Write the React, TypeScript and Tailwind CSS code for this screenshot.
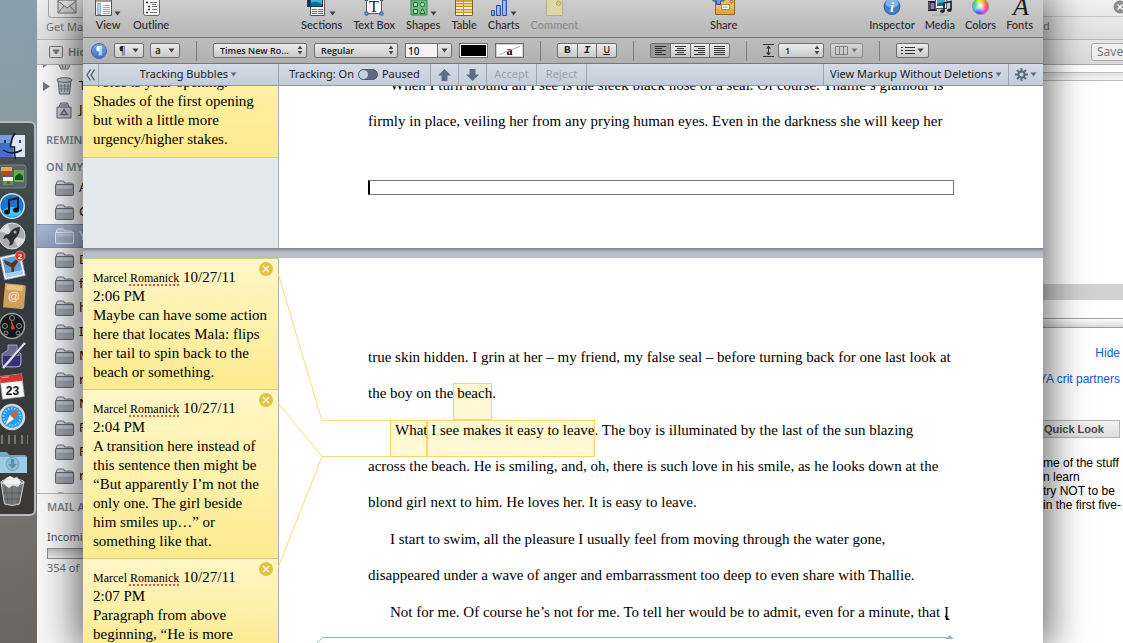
import type { ReactNode } from 'react';

const uiFont = "font-['Noto_Sans','Open_Sans',sans-serif]";
const labelFont = "font-['Lato','Open_Sans',sans-serif]";
const controlFont = "font-['Open_Sans','Noto_Sans',sans-serif]";
const serif = "font-['Liberation_Serif','Times_New_Roman',serif]";

function Caret({ className = 'fill-[#444]' }: { className?: string }) {
  return (
    <svg width="7" height="5" viewBox="0 0 7 5" className={`shrink-0 ${className}`} aria-hidden="true">
      <path d="M0.5 0.5h6L3.5 4.5z" />
    </svg>
  );
}

function Stepper() {
  return (
    <svg width="6" height="10" viewBox="0 0 6 10" className="pointer-events-none absolute right-1 top-0.5 fill-[#444]" aria-hidden="true">
      <path d="M3 0.5L5.3 4H0.7zM3 9.5L5.3 6H0.7z" />
    </svg>
  );
}

/* ---------- Toolbar drawings, all hang above the label and run past the top edge ---------- */

function ViewIcon() {
  return (
    <svg width="17" height="16" viewBox="0 0 17 16" aria-hidden="true">
      <path d="M.5 0v15.500h16V0" fill="#fff" stroke="#555" />
      <path d="M1 0h15v2H1z" fill="#999" />
      <path d="M2 3h4v12H2z" fill="#7aa6da" />
      <path d="M2.500 5h3M2.500 7h3M2.500 9h3M2.500 11h3M2.500 13h3" stroke="#e8f1fb" />
      <path d="M8 5.500h7M8 7.500h7M8 9.500h7M8 11.500h7M8 13.500h7" stroke="#aaa" />
    </svg>
  );
}
function OutlineIcon() {
  return (
    <svg width="17" height="16" viewBox="0 0 17 16" aria-hidden="true">
      <path d="M.5 0v13.500q0 2 2 2h12q2 0 2-2V0" fill="#f4f4f4" stroke="#666" />
      <path d="M3 2.500h2M5 6.500h2M5 9.500h2M3 12.500h2" stroke="#333" strokeWidth="1.500" />
      <path d="M7 2.500h7M9 6.500h5M9 9.500h5M7 12.500h7M9 4.500h4" stroke="#777" />
    </svg>
  );
}
function SectionsIcon() {
  return (
    <svg width="20" height="16" viewBox="0 0 20 16" aria-hidden="true">
      <path d="M3.500 0v15.500h14V0" fill="#fff" stroke="#555" />
      <path d="M0 0h16v7H0z" fill="#1b3446" />
      <path d="M4 0h11v6H4z" fill="#43b4d8" />
      <path d="M4 3q5-3 11 1v2H4z" fill="#0e6e98" />
      <path d="M5 9.500h5M5 11.500h5M5 13.500h5M11 9.500h5M11 11.500h5M11 13.500h5" stroke="#666" />
    </svg>
  );
}
function TextBoxIcon() {
  return (
    <svg width="20" height="17" viewBox="0 0 20 17" aria-hidden="true">
      <path d="M2.500 0v14.500h15V0" fill="#fff" stroke="#556" />
      <path d="M1 13h3v3H1zM16 13h3v3h-3zM1 0h3v1.500H1zM16 0h3v1.500h-3z" fill="#7eaee6" stroke="#2c4a7c" strokeWidth=".8" />
      <text x="10" y="13" textAnchor="middle" fontFamily="Liberation Serif" fontSize="16" fill="#222">T</text>
    </svg>
  );
}
function ShapesIcon() {
  return (
    <svg width="18" height="16" viewBox="0 0 18 16" aria-hidden="true">
      <path d="M1 0v15h16V0z" fill="#6cbf7d" stroke="#3b8350" />
      <g fill="#a9e0b3" stroke="#276338">
        <path d="M3.500 9.500h4v4h-4zM12.500 8.500L15 13.500h-5zM3.500 2.500h4v4h-4z" />
        <circle cx="12.500" cy="4.500" r="2.200" />
      </g>
    </svg>
  );
}
function TableIcon() {
  return (
    <svg width="18" height="16" viewBox="0 0 18 16" aria-hidden="true">
      <path d="M.5 0v15.500h17V0" fill="#fff3cb" stroke="#80612a" />
      <path d="M1 0h16v2H1z" fill="#d3a145" />
      <path d="M1 3.500h16M1 6.500h16M1 9.500h16M1 12.500h16M8.500 0v15" stroke="#c49136" />
      <path d="M1 4h7v2H1zM1 10h7v2H1zM9 4h8v2H9zM9 10h8v2H9z" fill="#f4cc78" />
    </svg>
  );
}
function ChartsIcon() {
  return (
    <svg width="18" height="16" viewBox="0 0 18 16" aria-hidden="true">
      <g fill="#7ba7e4" stroke="#2d559b">
        <path d="M1.500 10.500h3v5h-3zM6.500 5.500h4v10h-4zM12.500 0h4v15.500h-4z" />
      </g>
      <path d="M8 6.500v8M14 1v13.500" stroke="#b9d4f7" />
    </svg>
  );
}
function CommentIcon() {
  return (
    <svg width="17" height="16" viewBox="0 0 17 16" aria-hidden="true">
      <path d="M.5 0v15.500h16V0" fill="#ddd6a5" stroke="#b5ae86" />
      <circle cx="12.500" cy="3.500" r="2.200" fill="none" stroke="#b9a75c" />
      <path d="M11.500 2.500l2 2M13.500 2.500l-2 2" stroke="#b9a75c" />
    </svg>
  );
}
function ShareIcon() {
  return (
    <svg width="24" height="17" viewBox="0 0 24 17" aria-hidden="true">
      <path d="M3.500 0v15.500h19V0" fill="#efbd5a" stroke="#8d6420" />
      <path d="M4 10h18v5H4z" fill="#e3a940" />
      <path d="M9.500 5.500h8v5h-8z" fill="#fff" stroke="#a5884c" />
      <path d="M11 8h5" stroke="#777" strokeDasharray="2 .6" />
      <circle cx="19.500" cy="2.500" r="1.300" fill="#fff" stroke="#c23a2a" />
      <path d="M1 0h11v2H8.500v3.500h-4V2H1z" fill="#6b9bd8" stroke="#2f5589" />
    </svg>
  );
}
function InspectorIcon() {
  return (
    <svg width="18" height="17" viewBox="0 0 18 17" aria-hidden="true">
      <circle cx="9" cy="7.500" r="8" fill="#3f7fcf" stroke="#36609c" />
      <ellipse cx="9" cy="4" rx="6.500" ry="4.500" fill="#82b2ea" />
      <text x="9" y="13" textAnchor="middle" fontFamily="Liberation Serif" fontStyle="italic" fontWeight="bold" fontSize="15" fill="#fff">i</text>
    </svg>
  );
}
function MediaIcon() {
  return (
    <svg width="26" height="17" viewBox="0 0 26 17" aria-hidden="true">
      <path d="M1 2h9v10H1z" fill="#20222b" />
      <path d="M3.500 4h4v6h-4z" fill="#9c6bc2" />
      <path d="M2 3.500v8M9 3.500v8" stroke="#ddd" strokeDasharray="1 1" />
      <path d="M8.500 0v9.500h11V0" fill="#f5f8fb" stroke="#555" />
      <path d="M10 0h8v7h-8z" fill="#4ba8d4" />
      <path d="M10 5q4-3 8 0v2h-8z" fill="#255f7b" />
      <path d="M17 12V4l7-1.500v8.500" fill="none" stroke="#1e2430" strokeWidth="1.700" />
      <ellipse cx="15.300" cy="12.300" rx="2.200" ry="1.700" fill="#1e2430" />
      <ellipse cx="22.300" cy="11.300" rx="2.200" ry="1.700" fill="#1e2430" />
      <path d="M5 16h16" stroke="#999" strokeOpacity=".7" />
    </svg>
  );
}
function ColorsIcon() {
  return (
    <span className="mb-px block size-[17px] rounded-full border border-[#888] bg-[radial-gradient(circle,#fff_0%,#ffffff00_60%),conic-gradient(from_90deg,#ff4040,#ff40e0,#5040ff,#30c8ff,#30e070,#e0f030,#ff9030,#ff4040)]" />
  );
}
function FontsIcon() {
  return (
    <svg width="20" height="17" viewBox="0 0 20 17" className="overflow-visible" aria-hidden="true">
      <text x="11" y="16" textAnchor="middle" fontFamily="Liberation Serif" fontStyle="italic" fontSize="26" fill="#1c1c1c">A</text>
    </svg>
  );
}

function ToolButton({ label, icon, menu, disabled }: { label: string; icon: ReactNode; menu?: boolean; disabled?: boolean }) {
  return (
    <button type="button" disabled={disabled} className="flex flex-col items-center justify-end text-[#2b2b2b] disabled:text-[#8b8b8b]">
      <span className="flex items-end gap-0.5">
        {icon}
        {menu && <Caret />}
      </span>
      <span className={`${labelFont} h-[18px] whitespace-nowrap text-[11px] font-medium leading-[18px]`}>{label}</span>
    </button>
  );
}

/* ---------- Format bar ---------- */

const control = 'h-[15px] shrink-0 rounded-[2px] border border-[#6f6f6f] bg-linear-to-b from-[#ececec] to-[#c9c9c9] text-[#222]';

function Divider() {
  return <span className="mx-4 h-5 w-px shrink-0 bg-[#7d7d7d]" />;
}

function Picker({ label, value, width }: { label: string; value: string; width: string }) {
  return (
    <label className={`relative shrink-0 ${width}`}>
      <span className="sr-only">{label}</span>
      <select className={`${control} block w-full appearance-none pl-1.5 text-[9px] font-semibold leading-[13px]`}>
        <option>{value}</option>
      </select>
      <Stepper />
    </label>
  );
}

const alignments = [
  { name: 'Align left', d: 'M1 1.500h11M1 3.500h7M1 5.500h11M1 7.500h7M1 9.500h11' },
  { name: 'Align centre', d: 'M1 1.500h11M3 3.500h7M1 5.500h11M3 7.500h7M1 9.500h11' },
  { name: 'Align right', d: 'M1 1.500h11M5 3.500h7M1 5.500h11M5 7.500h7M1 9.500h11' },
  { name: 'Justify', d: 'M1 1.500h11M1 3.500h11M1 5.500h11M1 7.500h11M1 9.500h11' },
];

function FormatBar() {
  return (
    <div className={`${controlFont} flex h-[26px] shrink-0 items-center border-b border-[#777] bg-linear-to-b from-[#bdbdbd] to-[#b0b0b0] pl-2`}>
      <button type="button" aria-label="Styles drawer" className="size-4 shrink-0 rounded-full border border-[#3e68b0] bg-linear-to-b from-[#79a5e6] to-[#3f73cb] text-[10px] font-bold leading-[13px] text-white">¶</button>
      <div className="ml-[7px] flex gap-1.5">
        <button type="button" aria-label="Paragraph style" className={`${control} flex w-[30px] items-center justify-between px-1 text-[10px]`}>¶<Caret /></button>
        <button type="button" aria-label="Character style" className={`${control} flex w-[30px] items-center justify-between px-1 text-[10px] font-semibold`}>a<Caret /></button>
      </div>
      <Divider />
      <div className="flex gap-[7px]">
        <Picker label="Font" value="Times New Ro..." width="w-[94px]" />
        <Picker label="Typeface" value="Regular" width="w-[84px]" />
        <div className="flex w-[47px]">
          <input aria-label="Font size" defaultValue="10" className="h-[15px] w-[33px] border border-[#6f6f6f] bg-[#f3f3f3] pl-0.5 text-[10px] leading-[13px] font-semibold text-[#222]" />
          <button type="button" aria-label="Font sizes" className={`${control} -ml-px flex w-[15px] items-center justify-center`}><Caret /></button>
        </div>
        <button type="button" aria-label="Text colour" className="h-[15px] w-[29px] border border-[#6f6f6f] bg-black outline-1 -outline-offset-2 outline-white" />
        <button type="button" aria-label="Highlight colour" className={`${serif} relative h-[15px] w-[29px] border border-[#6f6f6f] bg-white text-xs font-bold leading-[12px] outline-1 -outline-offset-2 outline-[#d0d0d0]`}>
          a
          <svg className="absolute inset-0 size-full" viewBox="0 0 28 13" aria-hidden="true"><path d="M3 11L25 2" stroke="#aaa" /></svg>
        </button>
      </div>
      <Divider />
      <div className={`${control} flex w-[60px] divide-x divide-[#6f6f6f] font-['Liberation_Mono',monospace] text-[11px] leading-[13px]`}>
        <button type="button" aria-label="Bold" className="flex-1 font-bold">B</button>
        <button type="button" aria-label="Italic" className="flex-1 font-bold italic">I</button>
        <button type="button" aria-label="Underline" className="flex-1 underline">U</button>
      </div>
      <Divider />
      <div className={`${control} flex w-20 divide-x divide-[#6f6f6f]`}>
        {alignments.map((a, i) => (
          <button key={a.name} type="button" aria-label={a.name} className={`flex flex-1 items-center justify-center ${i === 0 ? 'bg-[#9a9a9a]' : ''}`}>
            <svg width="13" height="11" viewBox="0 0 13 11" stroke="#333" aria-hidden="true"><path d={a.d} /></svg>
          </button>
        ))}
      </div>
      <Divider />
      <svg width="11" height="13" viewBox="0 0 11 13" className="mr-1 shrink-0" aria-hidden="true">
        <path d="M0 .5h11M0 12.500h11M5.500 3v7" stroke="#333" />
        <path d="M5.500 1.500L8 4.500H3zM5.500 11.500L8 8.500H3z" fill="#333" />
      </svg>
      <Picker label="Line spacing" value="1" width="w-[46px]" />
      <button type="button" aria-label="Columns" disabled className={`${control} ml-1.5 flex w-[33px] items-center justify-between px-1 opacity-55`}>
        <svg width="13" height="9" viewBox="0 0 13 9" fill="none" stroke="#555" aria-hidden="true"><path d="M.5.5h12v8H.5zM4.500.5v8M8.500.5v8" /></svg>
        <Caret />
      </button>
      <Divider />
      <button type="button" aria-label="List style" className={`${control} flex w-[33px] items-center justify-between px-1`}>
        <svg width="14" height="9" viewBox="0 0 14 9" stroke="#333" aria-hidden="true"><path d="M0 1.500h2M0 4.500h2M0 7.500h2M4 1.500h10M4 4.500h10M4 7.500h10" /></svg>
        <Caret />
      </button>
    </div>
  );
}

function TrackingBar() {
  const cell = 'flex items-center justify-center border-r border-[#9ba4b1]';
  return (
    <div className="flex h-[22px] shrink-0 border-b border-[#9098a3] bg-linear-to-b from-[#d5dce6] to-[#c3ccd9] text-[11px] text-[#222]">
      <button type="button" aria-label="Hide comments" className={`${cell} w-4 shrink-0`}>
        <svg width="9" height="12" viewBox="0 0 9 12" fill="none" stroke="#4c5868" strokeWidth="1.300" aria-hidden="true"><path d="M4.500.5L1 6l3.500 5.500M8.500.5L5 6l3.500 5.500" /></svg>
      </button>
      <button type="button" className={`${cell} w-[180px] shrink-0 gap-0.5`}>Tracking Bubbles<Caret className="fill-[#5b6b80]" /></button>
      <div className={`${cell} w-[152px] shrink-0 gap-1 whitespace-nowrap`}>
        <span>Tracking: On</span>
        <button type="button" role="switch" aria-checked="true" aria-label="Tracking" className="flex h-[11px] w-5 shrink-0 rounded-full border border-[#4c5766] bg-[#616d7e]">
          <span className="size-[9px] rounded-full bg-[#c6d0dd]" />
        </button>
        <span>Paused</span>
      </div>
      <button type="button" aria-label="Previous change" className={`${cell} w-7 shrink-0`}>
        <svg width="13" height="12" viewBox="0 0 13 12" fill="#5f6d80" aria-hidden="true"><path d="M6.500 0L13 6.500H9.500V12h-6V6.500H0z" /></svg>
      </button>
      <button type="button" aria-label="Next change" className={`${cell} w-7 shrink-0`}>
        <svg width="13" height="12" viewBox="0 0 13 12" fill="#5f6d80" aria-hidden="true"><path d="M6.500 12L13 5.500H9.500V0h-6v5.500H0z" /></svg>
      </button>
      <button type="button" disabled className={`${cell} w-[50px] shrink-0 text-[#9aa1ab]`}>Accept</button>
      <button type="button" disabled className={`${cell} w-[50px] shrink-0 text-[#9aa1ab]`}>Reject</button>
      <div className={`${cell} flex-1`} />
      <button type="button" className={`${cell} w-[185px] shrink-0 gap-0.5 whitespace-nowrap`}>View Markup Without Deletions<Caret className="fill-[#5b6b80]" /></button>
      <button type="button" aria-label="Options" className="flex w-[34px] shrink-0 items-center justify-center gap-0.5">
        <svg width="13" height="13" viewBox="0 0 13 13" aria-hidden="true">
          <path d="M6.500 0v13M0 6.500h13M2 2l9 9M11 2l-9 9" stroke="#5b6b80" strokeWidth="2" />
          <circle cx="6.500" cy="6.500" r="3" fill="#c9d1dd" stroke="#5b6b80" strokeWidth="2" />
        </svg>
        <Caret className="fill-[#5b6b80]" />
      </button>
    </div>
  );
}

/* ---------- Comments and manuscript ---------- */

function Bubble({ time, lines }: { time: string; lines: string[] }) {
  return (
    <article className="relative border-b border-[#d3c78b] bg-linear-to-b from-[#fff6c6] to-[#fdeb8e] pb-[7px] pl-2.5 pt-[9px]">
      <button type="button" aria-label="Delete comment" className="absolute right-[5px] top-[3px]">
        <svg width="14" height="14" viewBox="0 0 14 14" aria-hidden="true">
          <circle cx="7" cy="7" r="7" fill="#e2c341" />
          <path d="M4 4l6 6M10 4l-6 6" stroke="#fffbe0" strokeWidth="1.500" />
        </svg>
      </button>
      <p className="whitespace-nowrap text-[15px] leading-[19px]">
        <span className="text-xs">
          Marcel <span className="underline decoration-[#f0503c] decoration-dotted decoration-2 underline-offset-2">Romanick</span>
        </span>{' '}
        10/27/11
        <br />
        {time}
        {lines.map((line) => (
          <span key={line} className="block">{line}</span>
        ))}
      </p>
    </article>
  );
}

function Mark({ children, className = '' }: { children: ReactNode; className?: string }) {
  return (
    <span className={`relative inline-block h-9 whitespace-pre align-top ${className}`}>
      <span className="absolute inset-x-0 top-2 h-[37px] border border-[#fad467] bg-[#fff3b4]/60" />
      <span className="relative">{children}</span>
    </span>
  );
}

function PagesWindow() {
  return (
    <section aria-label="Manuscript" className="absolute inset-y-0 left-[83px] right-20 flex flex-col overflow-hidden bg-[#b5bcc7]">
      <header className="flex h-[38px] shrink-0 items-end justify-between border-b border-[#757575] bg-linear-to-b from-[#cdcdcd] to-[#b7b7b7] pb-[3px] pl-3 pr-2.5">
        <div className="flex gap-3">
          <ToolButton label="View" icon={<ViewIcon />} menu />
          <ToolButton label="Outline" icon={<OutlineIcon />} />
        </div>
        <div className="flex gap-[11px]">
          <ToolButton label="Sections" icon={<SectionsIcon />} menu />
          <ToolButton label="Text Box" icon={<TextBoxIcon />} />
          <ToolButton label="Shapes" icon={<ShapesIcon />} menu />
          <ToolButton label="Table" icon={<TableIcon />} />
          <ToolButton label="Charts" icon={<ChartsIcon />} menu />
          <ToolButton label="Comment" icon={<CommentIcon />} disabled />
        </div>
        <ToolButton label="Share" icon={<ShareIcon />} />
        <div className="flex gap-2.5">
          <ToolButton label="Inspector" icon={<InspectorIcon />} />
          <ToolButton label="Media" icon={<MediaIcon />} />
          <ToolButton label="Colors" icon={<ColorsIcon />} />
          <ToolButton label="Fonts" icon={<FontsIcon />} />
        </div>
      </header>
      <FormatBar />
      <TrackingBar />

      <div className={`${serif} flex h-[162px] shrink-0 overflow-hidden bg-white text-[15px] text-black`}>
        <aside className="w-[196px] shrink-0 border-r border-[#a9adb3] bg-[#e4e9ed]">
          <div className="flex h-[72px] flex-col justify-end overflow-hidden whitespace-nowrap border-b border-[#d3c78b] bg-linear-to-b from-[#fff0a4] to-[#fdeb8e] pb-2 pl-2.5 leading-[19px]">
            <p>
              Voice is your opening.
              <br />
              Shades of the first opening
              <br />
              but with a little more
              <br />
              urgency/higher stakes.
            </p>
          </div>
        </aside>
        <div className="flex-1 overflow-hidden px-[89px]">
          <p className="-mt-[19px] whitespace-nowrap indent-[22px] leading-9">
            When I turn around all I see is the sleek black nose of a seal. Of course. Thallie’s glamour is
          </p>
          <p className="whitespace-nowrap leading-9">
            firmly in place, veiling her from any prying human eyes. Even in the darkness she will keep her
          </p>
          <div className="mt-[41px] h-[15px] border border-[#777] border-l-black shadow-[inset_1px_0_0_#000]" />
        </div>
      </div>

      <div className="h-2.5 shrink-0 bg-linear-to-b from-[#7d828a] via-[#b5bcc7] via-40% to-[#b8bfc9]" />

      <div className={`${serif} relative flex flex-1 overflow-hidden bg-white text-[15px] text-black`}>
        <aside className="w-[196px] shrink-0 border-r border-t border-r-[#a9adb3] border-t-[#d3c78b]">
          <Bubble time="2:06 PM" lines={['Maybe can have some action', 'here that locates Mala: flips', 'her tail to spin back to the', 'beach or something.']} />
          <Bubble time="2:04 PM" lines={['A transition here instead of', 'this sentence then might be', '“But apparently I’m not the', 'only one. The girl beside', 'him smiles up…” or', 'something like that.']} />
          <Bubble time="2:07 PM" lines={['Paragraph from above', 'beginning, “He is more']} />
        </aside>
        <div className="flex flex-1 flex-col gap-px overflow-hidden whitespace-nowrap px-[89px] pt-[81px] leading-9">
          <p>
            true skin hidden. I grin at her – my friend, my false seal – before turning back for one last look at
            <br />
            the boy on the<Mark> beach</Mark>.
          </p>
          <p className="pl-[22px]">
            <Mark className="pl-[5px]">What</Mark><Mark> I see makes it easy to leave</Mark>. The boy is illuminated by the last of the sun blazing
            <span className="-ml-[22px] block">
              across the beach. He is smiling, and, oh, there is such love in his smile, as he looks down at the
              <br />
              blond girl next to him. He loves her. It is easy to leave.
            </span>
          </p>
          <p className="indent-[22px]">
            I start to swim, all the pleasure I usually feel from moving through the water gone,
            <br />
            disappeared under a wave of anger and embarrassment too deep to even share with Thallie.
          </p>
          <p className="indent-[22px]">
            Not for me. Of course he’s not for me. To tell her would be to admit, even for a minute, that I
            <svg width="5" height="5" viewBox="0 0 5 5" className="-ml-1 inline-block align-text-bottom" aria-hidden="true"><path d="M0 0l5 5H1z" /></svg>
          </p>
        </div>
        <svg className="pointer-events-none absolute left-[195px] top-0" width="680" height="385" fill="none" aria-hidden="true">
          <g stroke="#fcd97a">
            <path d="M0 15L44 162.500H112" />
            <path d="M0 145L44 198.500H112" />
            <path d="M0 310L44 198.500" />
          </g>
          <path d="M39 385l6-5.500H668" stroke="#9bb6c9" />
          <path d="M667 381l4.500-4 4.500 4z" fill="#9bb6c9" />
        </svg>
      </div>
    </section>
  );
}

/* ---------- Mail window ---------- */

const folders = ['A', 'C', 'Y', 'D', 'f', 'h', 'I', 'M', 'r', 'N', 'F', 'P', 'r'];

function Folder({ selected }: { selected?: boolean }) {
  return (
    <svg width="19" height="17" viewBox="0 0 19 17" className="shrink-0" aria-hidden="true">
      <path d="M1.500 5V3q0-2 2-2h4q2 0 2 2h6.500q1.500 0 1.500 2" fill={selected ? '#b6c2d8' : '#d5d8dc'} stroke={selected ? '#e6ecf6' : '#6d7680'} />
      <path d="M.5 4.500h18v10q0 1-1 1h-16q-1 0-1-1z" fill={selected ? '#a3b2cc' : '#a2a8af'} stroke={selected ? '#e6ecf6' : '#636c76'} />
      <path d="M1.500 5.500h16v3h-16z" fill="#fff" fillOpacity=".35" />
    </svg>
  );
}

function MailWindow() {
  const heading = 'pl-[9px] text-[11px] font-semibold leading-[27px] text-[#7e868f]';
  return (
    <section aria-label="Mail" className="absolute inset-y-0 left-[37px] right-0 flex flex-col overflow-hidden bg-white">
      <header className="flex h-10 shrink-0 justify-between border-b border-[#b5b5b5] bg-linear-to-b from-[#f1f1f1] to-[#dedede]">
        <button type="button" className="flex flex-col items-start pl-[9px] text-[11px] leading-[18px] text-[#777]">
          <span className="ml-0.5 flex h-[18px] w-[60px] rounded-b border border-t-0 border-[#a5a5a5] bg-[#ececec] pl-2">
            <svg width="20" height="14" viewBox="0 0 20 14" fill="#d8d8d8" stroke="#777" aria-hidden="true"><path d="M1 0h18v13H1zM1 1l9 7 9-7M1 13l6-7M19 13l-6-7" /></svg>
          </span>
          Get Ma
        </button>
        <div className="w-20">
          <div className="flex h-[17px] items-start justify-end border-b border-[#c6c6c6]">
            <svg width="10" height="14" viewBox="0 0 10 14" aria-hidden="true"><circle cx="7" cy="7" r="6.500" fill="#8d8d8d" /><path d="M4.500 4.500l5 5M9.500 4.500l-5 5" stroke="#fff" strokeWidth="1.500" /></svg>
          </div>
          <p className="text-[11px] leading-[18px] text-[#777]">d</p>
        </div>
      </header>
      <div className="flex h-[25px] shrink-0 items-center justify-between border-b border-[#a8a8a8] bg-linear-to-b from-[#e6e6e6] to-[#dadada] text-[11px] text-[#777]">
        <button type="button" className="flex items-center gap-[5px] pl-3 font-semibold">
          <svg width="14" height="12" viewBox="0 0 14 12" fill="none" stroke="#777" aria-hidden="true"><rect x=".5" y=".5" width="13" height="11" rx="1" /><path d="M4 4h6L7 8z" fill="#777" /></svg>
          Hid
        </button>
        <button type="button" className="-mr-1 h-[18px] w-9 rounded-[3px] border border-[#a9a9a9] bg-[#efefef] pl-[5px] text-left text-xs leading-4">Save</button>
      </div>
      <div className="flex flex-1 justify-between overflow-hidden">
        <nav className="flex w-[70px] flex-col bg-[#f7f7f8] text-[13px] text-[#111]">
          <div className="flex h-[9px] items-start overflow-hidden pl-1.5">
            <svg width="34" height="8" viewBox="0 0 34 8" aria-hidden="true"><path d="M0 0h4L0 3z" fill="#77828e" /><path d="M16 0l2 4h7l2-4M19 0l1 3M23 0l-1 3" fill="#c6cbd1" stroke="#66707b" /></svg>
          </div>
          <div className="flex h-6 items-center gap-1.5 pl-1.5">
            <svg width="7" height="9" viewBox="0 0 7 9" fill="#6d7985" aria-hidden="true"><path d="M0 0l7 4.500L0 9z" /></svg>
            <svg width="17" height="18" viewBox="0 0 17 18" fill="#c4c9cf" stroke="#5f6872" aria-hidden="true"><path d="M2 4l1.500 13h10L15 4" /><ellipse cx="8.500" cy="3" rx="7.500" ry="2.300" /><path d="M5 7l.5 8M8.500 7v8M12 7l-.5 8M3 9h11M3.500 12h10" strokeWidth=".7" /></svg>
            <span>T</span>
          </div>
          <div className="flex h-6 items-center pl-[19px]">
            <svg width="16" height="17" viewBox="0 0 16 17" fill="#c4c9cf" stroke="#5f6872" aria-hidden="true"><path d="M1 5h14v11H1zM3 5l1.500-4h7L13 5M5 3h6" /><path d="M8 7.500l3 5H5z" fill="none" strokeWidth="1.500" /></svg>
            <span className="ml-[7px]">J</span>
          </div>
          <h2 className={`${heading} mt-1 h-[27px]`}>REMIN</h2>
          <h2 className={`${heading} h-[23px]`}>ON MY</h2>
          <ul className="flex-none">
            {folders.map((name, i) => (
              <li key={i} className={`flex h-6 items-center gap-[5px] pl-[18px] ${i === 2 ? 'border-y border-[#8496b8] bg-linear-to-b from-[#a9b8d2] to-[#8fa1c1] text-white' : ''}`}>
                <Folder selected={i === 2} />
                {name}
              </li>
            ))}
          </ul>
          <div className="h-[5px] overflow-hidden pl-[18px] pt-1"><Folder /></div>
          <footer className="flex-1 border-t border-[#b5b5b5] pl-2.5 text-[11px] text-[#66707c]">
            <h2 className="font-semibold leading-[26px] text-[#7e868f]">MAIL A</h2>
            <p className="mt-2 leading-[18px] text-[#444c56]">Incomi</p>
            <div className="mt-0.5 h-[11px] w-full border border-[#8d8d8d] bg-linear-to-b from-[#c4c4c4] to-[#f0f0f0]" />
            <p className="leading-[18px]">354 of</p>
          </footer>
        </nav>
        <article className="w-[84px] font-['Liberation_Sans',Arial,sans-serif] text-xs leading-[14px] text-black">
          <div className="mt-[7px] h-[9px] border-y border-[#bdbdbd] bg-linear-to-b from-[#e2e2e2] to-[#f4f4f4]" />
          <div className="mt-[203px] h-4 bg-[#d1d1d1]" />
          <div className="mt-[18px] h-2.5 border-y border-[#a0a0a0] bg-linear-to-b from-white to-[#d9d9d9]" />
          <div className="flex flex-col items-end whitespace-nowrap pr-[3px] pt-[18px] text-[#0b5bd8]">
            <a href="#details">Hide</a>
            <a href="#partners" className="mt-3">YA crit partners</a>
          </div>
          <button type="button" className="mt-[34px] h-[18px] w-[81px] border border-[#b4b4b4] bg-linear-to-b from-[#f3f3f3] to-[#dedede] pl-1 text-left text-[11px] font-bold leading-4 text-[#4a4a4a]">Quick Look</button>
          <p className="mt-[18px] whitespace-nowrap pl-1">
            me of the stuff
            <br />
            n learn
            <br />
            try NOT to be
            <br />
            in the first five-
          </p>
        </article>
      </div>
    </section>
  );
}

/* ---------- Dock ---------- */

function DockIcons() {
  return (
    <svg width="28" height="380" viewBox="0 0 28 380" aria-hidden="true">
      {/* Finder */}
      <path d="M0 7h25v22H0z" fill="#3f72c4" />
      <path d="M15 7h10v22H14q-1-5-.5-9h-3Q11 12 15 7z" fill="#dbe7f5" />
      <path d="M0 7h13v8H0z" fill="#8db1e6" fillOpacity=".7" />
      <path d="M15 5q-4 6-4.500 14h4q-.5 6 1 12" fill="none" stroke="#10151f" strokeWidth="1.500" />
      <path d="M5 12v3M20 12v3M3 22q9 6 19 0" fill="none" stroke="#10151f" strokeWidth="1.500" />
      {/* Spaces */}
      <rect x="-2" y="37" width="28" height="23" rx="3" fill="#596066" stroke="#7c8288" />
      <path d="M1 39h11v8H1z" fill="#f0a14c" /><path d="M1 43h11v4H1z" fill="#a4502a" />
      <path d="M14 42h10v12H14z" fill="#5cb34a" /><path d="M15 49q5-7 8 0v3h-8z" fill="#144f22" />
      <path d="M3 49h10v8H3z" fill="#f0f2ee" /><path d="M3 53h10v4H3z" fill="#4f9a5c" />
      <path d="M7 53h3v3H7z" fill="#b93124" />
      {/* iTunes */}
      <circle cx="12" cy="78" r="13" fill="#d5dee6" />
      <circle cx="12" cy="78" r="11.500" fill="#1976cf" />
      <ellipse cx="12" cy="84" rx="9" ry="5" fill="#42c0f4" />
      <path d="M9 84V72l9-2v12" fill="none" stroke="#0a1524" strokeWidth="2" />
      <ellipse cx="7" cy="84" rx="3" ry="2.500" fill="#0a1524" /><ellipse cx="16" cy="82" rx="3" ry="2.500" fill="#0a1524" />
      {/* Launchpad */}
      <circle cx="12" cy="108" r="13" fill="#a9acae" stroke="#e1e3e4" />
      <path d="M12 108L0 103a13 13 0 0 1 8-7zM12 108l13 3a13 13 0 0 1-7 8z" fill="#d9dadb" />
      <path d="M20 99q-7 0-11 7l-4 1-2 4 4-1 3 4-1 4 4-2 1-4q6-5 6-13z" fill="#2e3133" />
      <circle cx="15" cy="104" r="1.500" fill="#aaa" />
      {/* Mail */}
      <g transform="rotate(-12 12 138)">
        <path d="M2 127h21v23H2z" fill="#f5f7f8" stroke="#aab" strokeDasharray="2 1" />
        <path d="M4 129h17v19H4z" fill="#5f9ddd" />
        <path d="M5 130l7 5 6-3 1 3-5 5-2 6-2-1 1-6-5-4z" fill="#56391d" />
        <path d="M4 144h17v4H4z" fill="#a9cdee" />
      </g>
      <circle cx="20" cy="128" r="5" fill="#dd2c26" stroke="#f4b5b0" strokeWidth=".7" />
      <text x="20" y="131" textAnchor="middle" fontFamily="Liberation Sans" fontWeight="bold" fontSize="8" fill="#fff">2</text>
      {/* Address Book */}
      <g transform="rotate(5 12 168)">
        <path d="M0 156h8v24H0z" fill="#473426" />
        <path d="M4 156h19q2 0 2 2v20q0 2-2 2H4z" fill="#cf9f60" />
        <path d="M6 157h16v5H6z" fill="#e6c28a" />
        <text x="14" y="172" textAnchor="middle" fontFamily="Liberation Sans" fontSize="12" fill="#f8ecd6">@</text>
      </g>
      {/* Dashboard */}
      <circle cx="12" cy="198" r="12.500" fill="#15171a" stroke="#9a9fa4" strokeWidth="1.500" />
      <g fill="none" stroke="#a8acb0" strokeWidth=".8"><circle cx="12" cy="190" r="2.500" /><circle cx="5" cy="198" r="2.500" /><circle cx="19" cy="198" r="2.500" /><circle cx="6" cy="205" r="2" /><circle cx="18" cy="205" r="2" /></g>
      <path d="M10 188l2 12 3 1z" fill="#e33a2e" /><circle cx="12.500" cy="200" r="1.800" fill="#e33a2e" />
      {/* Ink bottle */}
      <path d="M8 217h9v5l4 4v9q0 4-4 4H6q-4 0-4-4v-9l6-4z" fill="#6a6d8b" stroke="#9ea2b8" />
      <path d="M3 228h17v7q0 3-3 3H6q-3 0-3-3z" fill="#38307a" />
      <path d="M25 215L11 231l-8 9" stroke="#dde3ee" strokeWidth="2.500" /><path d="M25 217L12 232" stroke="#343d5d" />
      {/* Calendar */}
      <g transform="rotate(-7 12 258)">
        <path d="M1 247h22v23H1z" fill="#fafafa" stroke="#aaa" strokeWidth=".6" />
        <path d="M1 247h22v7H1z" fill="#cf3a37" />
        <path d="M3 248.500h7" stroke="#f0aaa8" />
      </g>
      <text x="12.500" y="267" textAnchor="middle" fontFamily="Liberation Sans" fontWeight="bold" fontSize="12" fill="#151515">23</text>
      {/* Safari */}
      <circle cx="12" cy="289" r="12" fill="#2b9ae0" stroke="#d3d6d8" strokeWidth="2.500" />
      <circle cx="12" cy="289" r="8.500" fill="none" stroke="#bfe4fb" strokeDasharray="1 2" strokeWidth="2" />
      <path d="M19 281l-5 10-4-4z" fill="#e55c30" /><path d="M5 297l5-10 4 4z" fill="#f2f4f5" />
      {/* Separator */}
      <path d="M2 307v9M9 307v9M15 307v9M22 307v9M28 307v9" stroke="#77736f" strokeWidth="2" />
      {/* Downloads */}
      <path d="M0 324h7l2 3h15q3 0 3 3v15H0z" fill="#72a9c6" />
      <path d="M0 329h27v15q0 1-1 1H0z" fill="#9fcce2" />
      <circle cx="12.500" cy="336" r="6.500" fill="#8abcd5" stroke="#6ea3bf" />
      <path d="M11 331h3v5h3l-4.500 4.500L8 336h3z" fill="#5a90ae" />
      {/* Trash */}
      <path d="M1 354l3.500 22q8 3 15 0L24 354z" fill="#8f9396" fillOpacity=".7" stroke="#c9cccf" />
      <path d="M5 359l3 16M12 359v17M20 359l-3 16M3 365h18M4 371h16" stroke="#55595c" strokeWidth=".8" />
      <path d="M3 354l3-4 4-2 4 2 3-1 4 5-3 5-5-2-4 3-4-3z" fill="#f1f2f2" />
      <ellipse cx="12.500" cy="354" rx="11.500" ry="3" fill="none" stroke="#d9dcdd" />
    </svg>
  );
}

export default function App() {
  return (
    <main className={`${uiFont} relative h-screen overflow-hidden bg-linear-to-b from-[#87a0ae] via-[#8c9aa0] via-20% to-[#6d655f]`}>
      <MailWindow />
      <div className="pointer-events-none absolute inset-y-0 left-[83px] right-20 shadow-[0_0_36px_6px_rgba(0,0,0,0.6)]" />
      <PagesWindow />
      <nav aria-label="Dock" className="absolute left-0 top-[121px] h-[395px] w-9 overflow-hidden rounded-r-md border-2 border-l-0 border-[#b4bbbe] bg-linear-to-b from-[#4a555a] via-[#323c40] via-40% to-[#3d3936] pt-[5px]">
        <DockIcons />
      </nav>
    </main>
  );
}
